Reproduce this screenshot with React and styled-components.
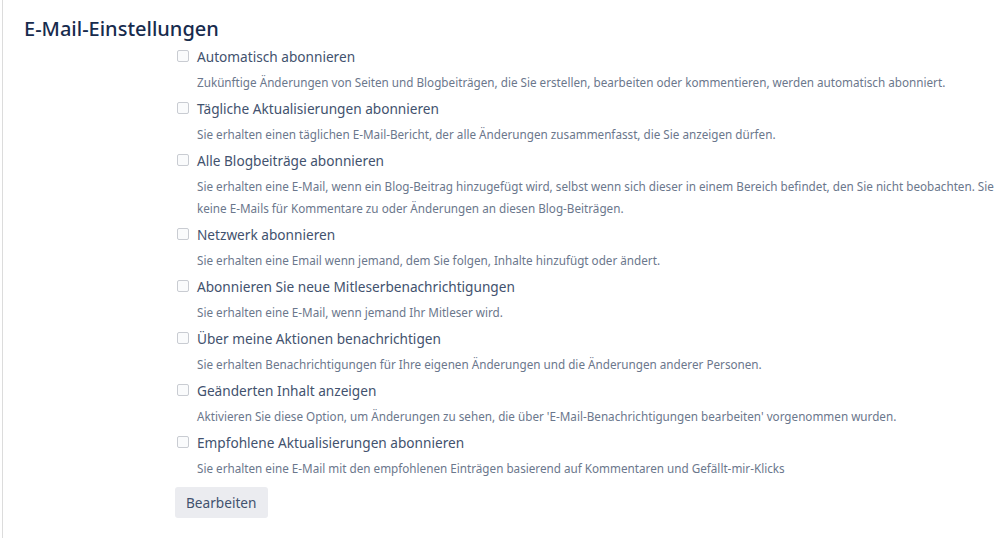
import styled, { createGlobalStyle } from "styled-components";

const GlobalStyle = createGlobalStyle`
  html, body {
    margin: 0;
    padding: 0;
    background: #fff;
    overflow: hidden;
  }
  body {
    font-family: "Noto Sans", "Open Sans", sans-serif;
  }
`;

const Page = styled.div`
  margin-left: 2px;
  border-left: 1px solid #dcdcdc;
  min-height: 538px;
  padding: 14px 0 0 21px;
  box-sizing: border-box;
`;

const Title = styled.h2`
  margin: 0;
  font-size: 20px;
  line-height: 30px;
  font-weight: 500;
  color: #172b4d;
`;

const Form = styled.div`
  margin-left: 152px;
  margin-top: -2px;
`;

const Option = styled.div`
  display: flex;
  flex-direction: column;
`;

const LabelRow = styled.label`
  display: flex;
  align-items: center;
  height: 28px;
  gap: 8px;
  padding-left: 1px;
  font-size: 13.65px;
  color: #42526e;
  white-space: nowrap;
`;

const Box = styled.span`
  width: 10px;
  height: 10px;
  border: 1px solid #c9ccd2;
  border-radius: 2px;
  background: #fafbfc;
  flex-shrink: 0;
`;

const Description = styled.div`
  padding-left: 21px;
  padding-top: 1px;
  font-size: 11.7px;
  line-height: 22px;
  color: #6b778c;
  white-space: nowrap;
  padding-bottom: 1px;
`;

const Button = styled.button`
  margin-top: 7px;
  margin-left: -1px;
  background: #ebecf0;
  border: none;
  border-radius: 3px;
  height: 31px;
  padding: 0 11px;
  font-family: inherit;
  font-size: 13.65px;
  color: #42526e;
  cursor: pointer;
`;

const options = [
  {
    label: "Automatisch abonnieren",
    desc: [
      "Zukünftige Änderungen von Seiten und Blogbeiträgen, die Sie erstellen, bearbeiten oder kommentieren, werden automatisch abonniert.",
    ],
  },
  {
    label: "Tägliche Aktualisierungen abonnieren",
    desc: [
      "Sie erhalten einen täglichen E-Mail-Bericht, der alle Änderungen zusammenfasst, die Sie anzeigen dürfen.",
    ],
  },
  {
    label: "Alle Blogbeiträge abonnieren",
    desc: [
      "Sie erhalten eine E-Mail, wenn ein Blog-Beitrag hinzugefügt wird, selbst wenn sich dieser in einem Bereich befindet, den Sie nicht beobachten. Sie",
      "keine E-Mails für Kommentare zu oder Änderungen an diesen Blog-Beiträgen.",
    ],
  },
  {
    label: "Netzwerk abonnieren",
    desc: [
      "Sie erhalten eine Email wenn jemand, dem Sie folgen, Inhalte hinzufügt oder ändert.",
    ],
  },
  {
    label: "Abonnieren Sie neue Mitleserbenachrichtigungen",
    desc: ["Sie erhalten eine E-Mail, wenn jemand Ihr Mitleser wird."],
  },
  {
    label: "Über meine Aktionen benachrichtigen",
    desc: [
      "Sie erhalten Benachrichtigungen für Ihre eigenen Änderungen und die Änderungen anderer Personen.",
    ],
  },
  {
    label: "Geänderten Inhalt anzeigen",
    desc: [
      "Aktivieren Sie diese Option, um Änderungen zu sehen, die über 'E-Mail-Benachrichtigungen bearbeiten' vorgenommen wurden.",
    ],
  },
  {
    label: "Empfohlene Aktualisierungen abonnieren",
    desc: [
      "Sie erhalten eine E-Mail mit den empfohlenen Einträgen basierend auf Kommentaren und Gefällt-mir-Klicks",
    ],
  },
];

export default function App() {
  return (
    <>
      <GlobalStyle />
      <Page>
        <Title>E-Mail-Einstellungen</Title>
        <Form>
          {options.map((o) => (
            <Option key={o.label}>
              <LabelRow>
                <Box />
                {o.label}
              </LabelRow>
              <Description>
                {o.desc.map((line, i) => (
                  <div key={i}>{line}</div>
                ))}
              </Description>
            </Option>
          ))}
          <Button>Bearbeiten</Button>
        </Form>
      </Page>
    </>
  );
}
